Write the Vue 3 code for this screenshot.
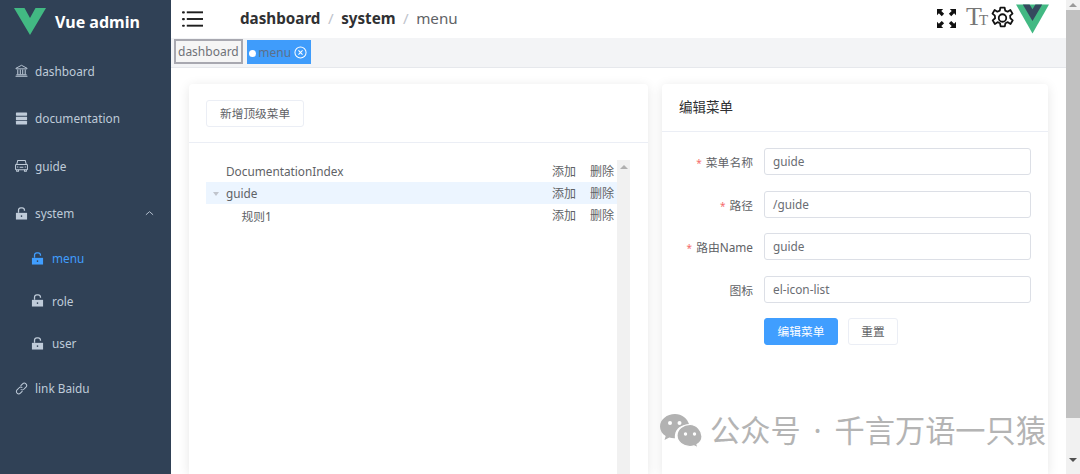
<script setup>
const topMenu = [
  { label: 'dashboard', icon: 'bank' },
  { label: 'documentation', icon: 'server' },
  { label: 'guide', icon: 'car' }
]
const subMenu = [
  { label: 'menu', active: true },
  { label: 'role', active: false },
  { label: 'user', active: false }
]
const treeRows = [
  { label: 'DocumentationIndex', level: 0, selected: false, arrow: false },
  { label: 'guide', level: 0, selected: true, arrow: true },
  { label: '规则1', level: 1, selected: false, arrow: false }
]
const formRows = [
  { label: '菜单名称', value: 'guide', required: true },
  { label: '路径', value: '/guide', required: true },
  { label: '路由Name', value: 'guide', required: true },
  { label: '图标', value: 'el-icon-list', required: false }
]
</script>

<template>
  <div class="app">
    <aside class="sidebar">
      <div class="logo">
        <svg class="logo-mark" viewBox="0 0 32 27"><path d="M0 0h10.500L16 10 21.500 0H32L16 27z" fill="#42b983" /></svg>
        <span class="logo-title">Vue admin</span>
      </div>
      <div v-for="item in topMenu" :key="item.label" class="menu-item">
        <svg v-if="item.icon === 'bank'" class="ico" viewBox="0 0 14 14" fill="none" stroke="currentColor">
          <path d="M1 4.600 7 1.400l6 3.200v.6H1z" stroke-width="1" />
          <path d="M3 6v5M5.700 6v5M8.300 6v5M11 6v5" stroke-width="1.100" />
          <path d="M1.500 11.600h11M.6 13.200h12.800" stroke-width="1.100" />
        </svg>
        <svg v-else-if="item.icon === 'server'" class="ico" viewBox="0 0 14 14" fill="currentColor">
          <rect x="1" y="0.500" width="12" height="3.600" rx=".5" />
          <rect x="1" y="5" width="12" height="3.800" rx=".5" />
          <rect x="1" y="9.700" width="12" height="3.800" rx=".5" />
        </svg>
        <svg v-else class="ico" viewBox="0 0 14 14" fill="none" stroke="currentColor" stroke-width="1.100">
          <path d="M1.800 6 3 1.500h8L12.200 6" />
          <rect x=".6" y="6" width="12.800" height="5.500" rx=".8" />
          <path d="M1.800 11.500v1.600h2v-1.600M10.200 11.500v1.600h2v-1.600M5 8.800h4M2.200 8.500h1.300M10.500 8.500h1.300" />
        </svg>
        <span>{{ item.label }}</span>
      </div>
      <div class="menu-item">
        <svg class="ico" viewBox="0 0 14 14" fill="currentColor">
          <path d="M1 6.300h12v7.200H1z" />
          <path d="M3.800 6.300V3.400A2.400 2.400 0 0 1 6.200 1h1.600A2.400 2.400 0 0 1 10.200 3.400v.7" fill="none" stroke="currentColor" stroke-width="1.400" />
          <circle cx="7" cy="9.800" r=".9" fill="#304156" />
        </svg>
        <span>system</span>
        <svg class="chev" viewBox="0 0 10 6" fill="none" stroke="currentColor"><path d="M1 5 5 1.500 9 5" /></svg>
      </div>
      <div v-for="sub in subMenu" :key="sub.label" class="sub-item" :class="{ active: sub.active }">
        <svg class="ico" viewBox="0 0 14 14" fill="currentColor">
          <path d="M1 6.300h12v7.200H1z" />
          <path d="M3.800 6.300V3.400A2.400 2.400 0 0 1 6.200 1h1.600A2.400 2.400 0 0 1 10.200 3.400v.7" fill="none" stroke="currentColor" stroke-width="1.400" />
          <circle cx="7" cy="9.800" r=".9" fill="#304156" />
        </svg>
        <span>{{ sub.label }}</span>
      </div>
      <div class="menu-item">
        <svg class="ico" viewBox="0 0 14 14" fill="none" stroke="currentColor" stroke-width="1.100">
          <path d="M6 4.200 8.200 2a2.400 2.400 0 0 1 3.600 3.500L9.500 7.800a2.400 2.400 0 0 1-3.400 0" />
          <path d="M8 9.800 5.800 12a2.400 2.400 0 0 1-3.600-3.500L4.500 6.200a2.400 2.400 0 0 1 3.400 0" />
        </svg>
        <span>link Baidu</span>
      </div>
    </aside>

    <main class="main">
      <header class="navbar">
        <svg class="hamburger" viewBox="0 0 22 18" fill="#1f1f1f">
          <rect x="0" y="1" width="3" height="2.200" rx="1" />
          <rect x="0" y="8" width="3" height="2.200" rx="1" />
          <rect x="0" y="15" width="3" height="2.200" rx="1" />
          <rect x="5" y="1" width="17" height="2" />
          <rect x="5" y="8" width="17" height="2" />
          <rect x="5" y="15" width="17" height="2" />
        </svg>
        <div class="crumbs">
          <b>dashboard</b><i>/</i><b>system</b><i>/</i><span>menu</span>
        </div>
        <div class="tools">
          <svg class="fs" viewBox="0 0 20 20" fill="#111">
            <path d="M0 0h6.500L4.500 2l3 3-2.500 2.500-3-3-2 2zM20 0v6.500l-2-2-3 3L12.500 5l3-3-2-2zM0 20v-6.500l2 2 3-3L7.500 15l-3 3 2 2zM20 20h-6.500l2-2-3-3 2.500-2.500 3 3 2-2z" />
          </svg>
          <span class="tt"><span class="tt-big">T</span><small>T</small></span>
          <svg class="gear" viewBox="1 1 22 22" fill="none" stroke="#111" stroke-width="1.700" stroke-linejoin="round">
            <circle cx="12" cy="12" r="3.600" />
            <path d="M10 2h4l.6 3 2.300 1 2.600-1.700 2.100 3.500-2.300 2 .2 2.400 2.300 2-2.100 3.500-2.600-1.700-2.300 1-.6 3h-4l-.6-3-2.300-1-2.600 1.700-2.100-3.500 2.300-2-.2-2.400-2.300-2 2.100-3.500 2.600 1.700 2.300-1z" />
          </svg>
          <svg class="vue" viewBox="0 0 34 30">
            <path d="M0 0h34L17 30z" fill="#42b983" />
            <path d="M7 0h7l3 5 3-5h7L17 17z" fill="#35495e" />
          </svg>
        </div>
      </header>

      <nav class="tags">
        <span class="tag plain">dashboard</span>
        <span class="tag current">
          <em class="dot"></em>
          <span>menu</span>
          <svg class="close" viewBox="0 0 14 14" fill="none" stroke="#fff" stroke-width="1.100"><circle cx="7" cy="7" r="6" /><path d="m4.800 4.800 4.400 4.400m0-4.400-4.400 4.400" /></svg>
        </span>
      </nav>

      <section class="content">
        <div class="card left">
          <div class="card-head">
            <button class="btn">新增顶级菜单</button>
          </div>
          <div class="tree-wrap">
            <div class="tree">
              <div v-for="row in treeRows" :key="row.label" class="tree-row" :class="{ selected: row.selected, nested: row.level === 1 }">
                <em class="caret" :class="{ show: row.arrow }"></em>
                <span class="tree-label">{{ row.label }}</span>
                <span class="act">添加</span>
                <span class="act">删除</span>
              </div>
            </div>
            <div class="tree-bar"><em class="up small"></em></div>
          </div>
        </div>

        <div class="card right">
          <div class="edit-head">编辑菜单</div>
          <div class="form">
            <div v-for="row in formRows" :key="row.label" class="form-row">
              <label><em v-if="row.required">*</em>{{ row.label }}</label>
              <div class="input">{{ row.value }}</div>
            </div>
            <div class="form-actions">
              <button class="btn primary">编辑菜单</button>
              <button class="btn reset">重置</button>
            </div>
          </div>
        </div>

        <div class="watermark">
          <svg viewBox="0 0 42 34" fill="#b2b2b2">
            <path d="M15 0C7 0 0 5.500 0 12.500c0 4 2.200 7.300 5.700 9.500L4.500 26l4.800-2.500c1.800.5 3.700.8 5.700.7 0 0-.4-1.600 0-3.700C16 14 22 10.500 29.200 10.600 27.500 4.500 21.800 0 15 0z" />
            <path d="M30 10.500c-6.700 0-13 4.600-13 11S23.300 32.500 30 32.500c1.500 0 2.800-.2 4-.6l4 2-1-3.400c3-1.900 5-4.800 5-8.100C42 16.600 36.700 10.500 30 10.500z" stroke="#fff" stroke-width="1.200" />
            <circle cx="10" cy="9" r="2" fill="#fff" /><circle cx="19.500" cy="9" r="2" fill="#fff" />
            <circle cx="25.500" cy="20" r="1.700" fill="#fff" /><circle cx="34.500" cy="20" r="1.700" fill="#fff" />
          </svg>
          <span>公众号</span>
          <span class="wm-dot">·</span>
          <span class="wm-name">千言万语一只猿</span>
        </div>
      </section>
    </main>

    <div class="page-bar">
      <em class="up"></em>
      <div class="thumb"></div>
      <em class="down"></em>
    </div>
  </div>
</template>

<style>
html, body { margin: 0; height: 100%; overflow: hidden; background: #fff; }
</style>

<style scoped>
.app {
  display: flex;
  width: 1080px;
  height: 474px;
  overflow: hidden;
  font-family: "Noto Sans", "Noto Sans CJK SC", sans-serif;
  color: #606266;
}
.sidebar {
  width: 171px;
  flex: none;
  background: #304156;
  color: #bfcbd9;
  font-size: 11.800px;
}
.logo {
  height: 47px;
  display: flex;
  align-items: flex-start;
  padding: 8px 0 0 14px;
  box-sizing: border-box;
  gap: 9px;
}
.logo-mark { width: 32px; height: 27px; }
.logo-title {
  color: #fff;
  font-weight: 700;
  font-size: 16px;
  line-height: 28px;
}
.menu-item {
  height: 47.500px;
  display: flex;
  align-items: center;
  padding-left: 15px;
  box-sizing: border-box;
  gap: 7px;
}
.ico { width: 13px; height: 13px; flex: none; }
.chev { width: 9px; height: 6px; margin-left: auto; margin-right: 17px; }
.sub-item {
  height: 42.500px;
  display: flex;
  align-items: center;
  padding-left: 31px;
  gap: 8px;
}
.sub-item.active { color: #409eff; }
.main {
  flex: 1;
  min-width: 0;
  display: flex;
  flex-direction: column;
}
.navbar {
  height: 38px;
  flex: none;
  display: flex;
  align-items: center;
  padding: 0 17px 0 11px;
}
.hamburger { width: 21px; height: 18px; margin-right: 37px; }
.crumbs {
  display: flex;
  align-items: center;
  font-size: 15.200px;
  color: #97a8be;
  margin-top: -2px;
}
.crumbs b { color: #303133; font-weight: 700; }
.crumbs i { font-style: normal; color: #c0c4cc; margin: 0 7.500px; }
.crumbs span { color: #606266; }
.tools {
  margin-left: auto;
  display: flex;
  align-items: center;
}
.fs { width: 19px; height: 19px; margin: -2px 10px 0 0; }
.tt {
  font-family: "Liberation Serif", serif;
  color: #777;
  font-size: 26px;
  line-height: 26px;
  width: 21px;
  margin: -2px 4px 0 0;
  display: flex;
  align-items: baseline;
}
.tt-big { letter-spacing: -3px; }
.tt small { font-size: 15px; }
.gear { width: 23px; height: 24px; margin-top: -2px; }
.vue { width: 33px; height: 30px; margin: 0 0 0 2px; }
.tags {
  height: 30px;
  flex: none;
  box-sizing: border-box;
  background: #f3f4f6;
  border-bottom: 1px solid #e6e8ec;
  display: flex;
  align-items: flex-start;
  padding: 0 3px;
  gap: 4px;
  font-size: 12px;
}
.tag {
  height: 24px;
  display: flex;
  align-items: center;
  box-sizing: border-box;
}
.plain {
  border: 2px solid #a8a8b0;
  padding: 0 2px;
  color: #6f7278;
  background: #f5f5f5;
  height: 25px;
  margin-top: 1px;
}
.current {
  background: #3f9cfb;
  color: #5c6f8a;
  padding: 0 3px 0 2px;
  gap: 2.500px;
  width: 64px;
  margin-top: 2px;
}
.dot { width: 7px; height: 7px; background: #fff; border-radius: 50%; margin-top: 3px; flex: none; }
.close { width: 13px; height: 13px; flex: none; }
.content {
  flex: 1;
  min-height: 0;
  position: relative;
  display: flex;
  gap: 14px;
  padding: 16px 18px 0;
  background: #fff;
}
.card {
  background: #fff;
  border-radius: 4px 4px 0 0;
  box-shadow: 0 2px 12px rgba(0, 0, 0, .1);
  font-size: 12px;
}
.left { width: 459px; flex: none; }
.right { width: 386px; flex: none; }
.card-head {
  height: 59px;
  box-sizing: border-box;
  border-bottom: 1px solid #ebeef5;
  padding: 16px 17px;
}
.btn {
  height: 27px;
  box-sizing: border-box;
  padding: 0 13px;
  border: 1px solid #ebeef5;
  border-radius: 3px;
  background: #fff;
  color: #606266;
  font: inherit;
  font-size: 11.700px;
  line-height: 25px;
}
.tree-wrap {
  display: flex;
  height: 400px;
  padding: 17px 0 0 17px;
}
.tree { width: 411px; flex: none; }
.tree-row {
  height: 22px;
  display: flex;
  align-items: center;
  font-size: 11.800px;
  padding-right: 1px;
  box-sizing: border-box;
}
.selected { background: #ecf5ff; }
.caret {
  width: 0;
  height: 0;
  margin: 1px 7px 0 7px;
  border: 3.500px solid transparent;
  border-bottom-width: 0;
  border-top-width: 4px;
}
.caret.show { border-top-color: #c0c4cc; }
.nested { padding-left: 15.500px; }
.tree-label { flex: 1; }
.act { font-size: 12px; width: 38px; }
.act:last-child { width: 26px; }
.tree-bar {
  width: 13px;
  background: #f1f1f1;
  display: flex;
  justify-content: center;
  padding-top: 5px;
  box-sizing: border-box;
}
.edit-head {
  height: 48px;
  box-sizing: border-box;
  border-bottom: 1px solid #ebeef5;
  padding-left: 17px;
  font-size: 13.500px;
  line-height: 47px;
  color: #303133;
}
.form { padding: 16px 17px 0 0; }
.form-row {
  display: flex;
  align-items: center;
  height: 27px;
  margin-bottom: 15.500px;
}
.form-row label {
  width: 102px;
  flex: none;
  text-align: right;
  padding-right: 11px;
  box-sizing: border-box;
  font-size: 11.800px;
}
.form-row em { color: #f56c6c; font-style: normal; margin-right: 4px; font-size: 10px; }
.input {
  flex: 1;
  height: 27px;
  box-sizing: border-box;
  border: 1px solid #dcdfe6;
  border-radius: 3px;
  padding: 0 8px;
  font-size: 11.800px;
  line-height: 25px;
  color: #6a6d73;
}
.form-actions {
  display: flex;
  gap: 10px;
  padding-left: 102px;
  margin-top: 0;
}
.primary {
  background: #409eff;
  border-color: #409eff;
  color: #fff;
  width: 74px;
  padding: 0;
}
.reset { width: 50px; padding: 0; }
.watermark {
  position: absolute;
  left: 489px;
  top: 344px;
  display: flex;
  align-items: center;
  color: #b4b4b4;
  font-size: 30.200px;
  line-height: 38px;
  white-space: nowrap;
}
.watermark svg { width: 42px; height: 34px; margin-right: 8px; }
.wm-dot { width: 34px; text-align: center; }
.page-bar {
  width: 14px;
  flex: none;
  background: #f1f1f1;
  display: flex;
  flex-direction: column;
  align-items: center;
}
.thumb { width: 14px; flex: none; height: 408px; background: #c1c1c1; margin: 3px 0 40px; }
.up, .down {
  width: 0;
  height: 0;
  border: 4px solid transparent;
  flex: none;
}
.up { border-top-width: 0; border-bottom: 4px solid #9a9a9a; margin-top: 3px; }
.up.small { border-bottom-color: #b0b0b0; margin-top: 0; }
.down { border-bottom-width: 0; border-top: 4px solid #505050; }
</style>
